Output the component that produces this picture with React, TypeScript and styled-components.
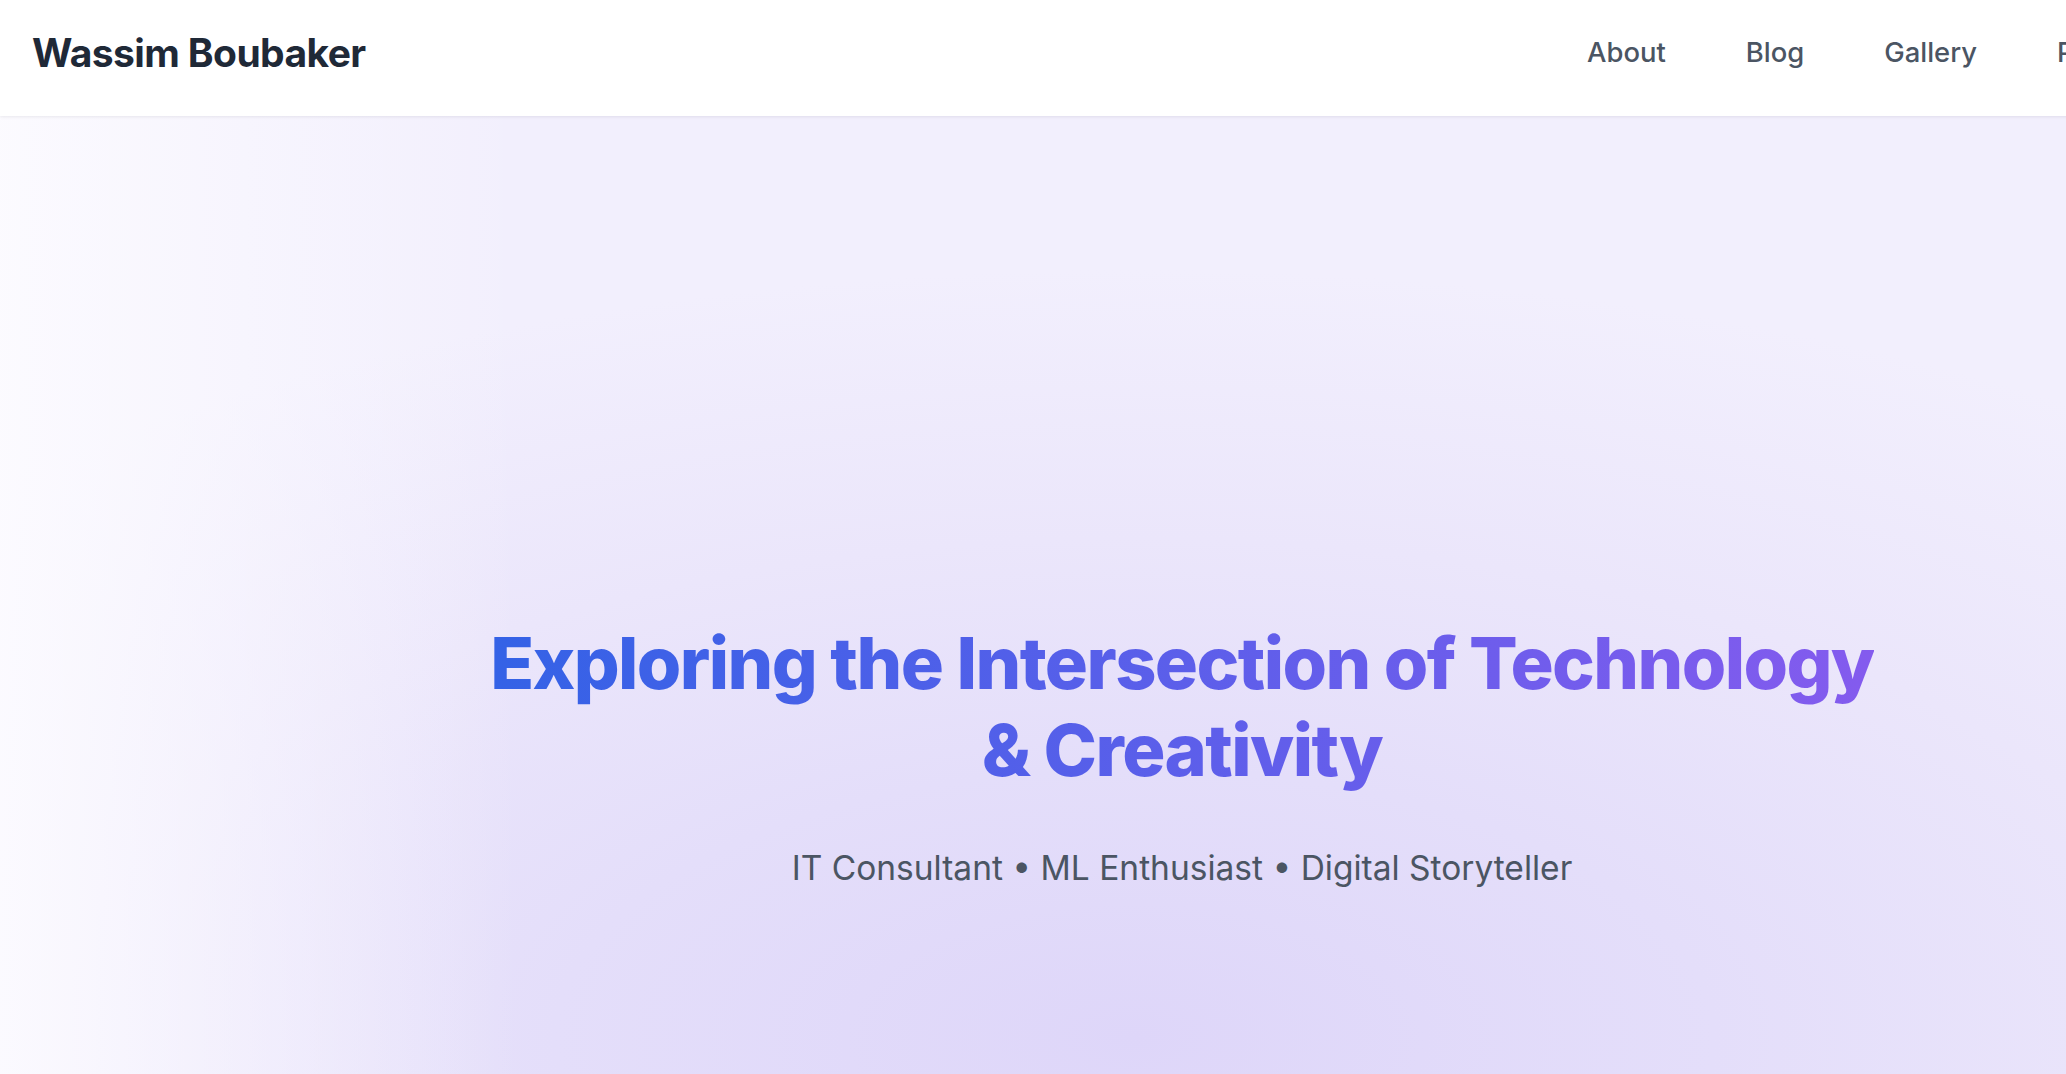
import styled, { createGlobalStyle } from "styled-components";

const GlobalStyle = createGlobalStyle`
  html, body {
    margin: 0;
    padding: 0;
    overflow-x: hidden;
  }

  body {
    font-family: Inter, "Noto Sans", "Liberation Sans", sans-serif;
    background: #ffffff;
    -webkit-font-smoothing: antialiased;
  }
`;

const Page = styled.div`
  width: 2364px;
`;

const HeaderWrapper = styled.header`
  position: relative;
  z-index: 2;
  height: 116px;
  box-sizing: border-box;
  padding: 0 17px 12px 32px;
  display: flex;
  align-items: center;
  justify-content: space-between;
  background: #ffffff;
  box-shadow: 0 1px 4px rgba(15, 23, 42, 0.05), 0 1px 2px rgba(15, 23, 42, 0.03);

  a {
    text-decoration: none;
  }
`;

const Logo = styled.a`
  font-size: 39px;
  font-weight: 700;
  letter-spacing: -0.015em;
  color: #1f2937;
`;

const Nav = styled.nav`
  display: flex;
  align-items: center;
  gap: 80px;
`;

const NavLink = styled.a`
  font-size: 27.4px;
  font-weight: 500;
  color: #4b5563;
`;

const Hero = styled.section`
  min-height: 1280px;
  display: flex;
  flex-direction: column;
  align-items: center;
  justify-content: center;
  text-align: center;
  background:
    linear-gradient(to right, rgba(252, 251, 255, 0.95) 0%, rgba(252, 251, 255, 0) 22%),
    radial-gradient(ellipse 70% 60% at 48% 72%, #ded6f9 0%, #e4defa 35%, #ebe6fb 65%, #f2effd 100%);
`;

const Title = styled.h1`
  margin: 0 0 52px;
  font-size: 72px;
  font-weight: 800;
  line-height: 1.2;
  letter-spacing: -0.022em;
  background: linear-gradient(to right, #3462e6, #845bee);
  -webkit-background-clip: text;
  background-clip: text;
  color: transparent;
`;

const Subtitle = styled.p`
  margin: 0;
  font-size: 33.5px;
  line-height: 1.4;
  font-weight: 400;
  color: #4b5563;
`;

const links = ["About", "Blog", "Gallery", "Projects", "Contact"];

export default function App() {
  return (
    <Page>
      <GlobalStyle />
      <HeaderWrapper>
        <Logo href="#">Wassim Boubaker</Logo>
        <Nav>
          {links.map(link => (
            <NavLink key={link} href="#">{link}</NavLink>
          ))}
        </Nav>
      </HeaderWrapper>
      <Hero>
        <Title>
          Exploring the Intersection of Technology
          <br />
          &amp; Creativity
        </Title>
        <Subtitle>IT Consultant • ML Enthusiast • Digital Storyteller</Subtitle>
      </Hero>
    </Page>
  );
}
